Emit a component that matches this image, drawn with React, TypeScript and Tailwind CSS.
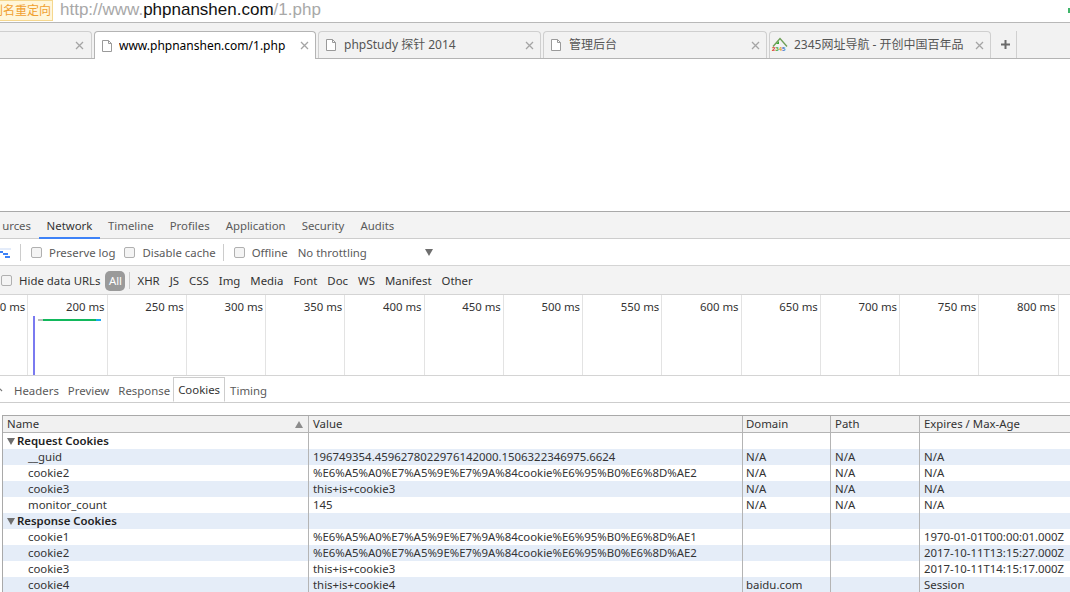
const UI_FONT = 'font-["Noto_Sans","Noto_Sans_CJK_SC",sans-serif]';

const FileIcon = () => (
  <svg width="12" height="14" viewBox="0 0 12 14" className="shrink-0">
    <path d="M1.5 1.5h6l3 3v8h-9z" fill="#fff" stroke="#9a9a9a" strokeWidth="1" />
    <path d="M7.5 1.5v3h3" fill="none" stroke="#9a9a9a" strokeWidth="1" />
  </svg>
);

const CloseX = () => (
  <svg width="9" height="9" viewBox="0 0 9 9" className="shrink-0">
    <path d="M1 1l7 7M8 1l-7 7" stroke="#a5a5a5" strokeWidth="1.3" />
  </svg>
);

const HouseIcon = () => (
  <span className="relative block w-[16px] h-[16px] shrink-0">
    <svg width="16" height="11" viewBox="0 0 16 11" className="block">
      <path d="M1 9.5L8 1.5l7 8" fill="none" stroke="#6f9f58" strokeWidth="1.4" />
      <path d="M4 7l3-3v3z" fill="#3fa535" />
    </svg>
    <span className='absolute left-0 top-[9px] flex text-[6px] leading-[7px] font-bold font-["Liberation_Sans",sans-serif]'>
      <span className="text-[#d9261c]">2</span>
      <span className="text-[#3fa535]">3</span>
      <span className="text-[#e09a1a]">4</span>
      <span className="text-[#2a6fc4]">5</span>
    </span>
  </span>
);

const Tab = ({ title, width, active, icon }: { title: string; width: number; active?: boolean; icon?: 'house' }) => (
  <div
    style={{ width }}
    className={`shrink-0 flex items-center border border-b-0 rounded-t-[4px] pr-[6px] ${icon === 'house' ? 'pl-[2px] gap-[6px]' : active ? 'pl-[6px] gap-[6px]' : 'pl-[6px] gap-[7px]'} ${
      active ? 'h-[28px] -mb-px z-10 bg-white border-[#b4b4b4] text-black' : 'h-[27px] bg-[#f2f2f2] border-[#cfcfcf] text-[#555]'
    }`}
  >
    {icon === 'house' ? <HouseIcon /> : <FileIcon />}
    <span className="flex-1 whitespace-nowrap overflow-hidden text-[12px] text-clip">{title}</span>
    <CloseX />
  </div>
);

const Check = ({ label, className = '' }: { label: string; className?: string }) => (
  <span className={`flex items-center gap-[7px] whitespace-nowrap ${className}`}>
    <span className="w-[11px] h-[11px] rounded-[2px] border border-[#b0b0b0] bg-[#f4f4f4] shrink-0" />
    {label}
  </span>
);

const TICKS = [150, 200, 250, 300, 350, 400, 450, 500, 550, 600, 650, 700, 750, 800, 850];

const COLS = 'grid grid-cols-[306px_434px_88px_89px_1fr]';

type Row = { name: string; value?: string; domain?: string; path?: string; expires?: string; group?: boolean };

const NA = { domain: 'N/A', path: 'N/A', expires: 'N/A' };
const UTF = '%E6%A5%A0%E7%A5%9E%E7%9A%84cookie%E6%95%B0%E6%8D%AE2';

const ROWS: Row[] = [
  { name: 'Request Cookies', group: true },
  { name: '__guid', value: '196749354.4596278022976142000.1506322346975.6624', ...NA },
  { name: 'cookie2', value: UTF, ...NA },
  { name: 'cookie3', value: 'this+is+cookie3', ...NA },
  { name: 'monitor_count', value: '145', ...NA },
  { name: 'Response Cookies', group: true },
  { name: 'cookie1', value: '%E6%A5%A0%E7%A5%9E%E7%9A%84cookie%E6%95%B0%E6%8D%AE1', expires: '1970-01-01T00:00:01.000Z' },
  { name: 'cookie2', value: UTF, expires: '2017-10-11T13:15:27.000Z' },
  { name: 'cookie3', value: 'this+is+cookie3', expires: '2017-10-11T14:15:17.000Z' },
  { name: 'cookie4', value: 'this+is+cookie4', domain: 'baidu.com', expires: 'Session' },
];

export default function App() {
  return (
    <div className={`w-[1070px] h-[592px] overflow-hidden flex flex-col bg-white text-[11.4px] text-[#333] ${UI_FONT}`}>
      {/* address bar */}
      <div className="h-[23px] shrink-0 flex items-start border-b border-[#b8b8b8] relative">
        <div className="h-[21px] w-[53px] shrink-0 flex items-center justify-end overflow-hidden bg-[#fff6da] border border-l-0 border-[#f5d78e] text-[#f0a030] text-[12px] leading-none whitespace-nowrap pr-[1px]">
          别名重定向
        </div>
        <div className='ml-[7px] text-[17px] leading-[20px] text-[#a8a8a8] whitespace-nowrap font-["Liberation_Sans",sans-serif]'>
          http://www.<span className="text-[#111]">phpnanshen.com</span>/1.php
        </div>
        <span className="absolute right-0 top-[8px] w-[2px] h-[5px] bg-[#3fb56a]" />
      </div>

      {/* tab strip */}
      <div className="h-[36px] shrink-0 bg-[#f2f2f2] border-b border-[#b4b4b4] flex items-end gap-[2px]">
        <div className="h-[27px] w-[92px] shrink-0 border border-l-0 border-b-0 border-[#cfcfcf] rounded-tr-[4px] flex items-center justify-end pr-[7px]">
          <CloseX />
        </div>
        <Tab title="www.phpnanshen.com/1.php" width={222} active />
        <Tab title="phpStudy 探针 2014" width={223} />
        <Tab title="管理后台" width={224} />
        <Tab title="2345网址导航 - 开创中国百年品" width={222} icon="house" />
        <div className="w-[24px] h-[27px] shrink-0 flex items-center pl-[7px] border-r border-[#d0d0d0]">
          <svg width="11" height="11" viewBox="0 0 11 11">
            <path d="M5.5 1v9M1 5.5h9" stroke="#6a6a6a" strokeWidth="2" />
          </svg>
        </div>
      </div>

      {/* page */}
      <div className="h-[152px] shrink-0 bg-white" />

      {/* devtools tabs */}
      <div className="h-[28px] shrink-0 bg-[#f3f3f3] border-t border-[#a9a9a9] border-b border-b-[#cdcdcd] flex items-stretch whitespace-nowrap text-[#5a5a5a]">
        <div className="w-[39px] shrink-0 flex items-center justify-end pr-[8px] pt-px overflow-hidden">urces</div>
        <div className="w-[61px] shrink-0 flex items-center justify-center pt-[3px] border-b-2 border-[#3e82f7] text-[#333] h-[27px]">Network</div>
        <div className="flex items-center gap-[16px] pl-[8px] pt-px">
          <span>Timeline</span>
          <span>Profiles</span>
          <span>Application</span>
          <span>Security</span>
          <span>Audits</span>
        </div>
      </div>

      {/* network toolbar */}
      <div className="h-[27px] shrink-0 bg-white border-b border-[#d4d4d4] flex items-center pt-px whitespace-nowrap text-[#5a5a5a]">
        <svg width="11" height="10" viewBox="0 0 11 10" className="shrink-0">
          <path d="M0 1h11" stroke="#c9d9f5" strokeWidth="1" />
          <path d="M0 4h3M3 6h5M5 9h5" stroke="#3e82f7" strokeWidth="2" />
        </svg>
        <span className="w-px h-[17px] bg-[#ccc] ml-[9px]" />
        <Check label="Preserve log" className="ml-[10px]" />
        <Check label="Disable cache" className="ml-[9px]" />
        <span className="w-px h-[17px] bg-[#ccc] ml-[7px]" />
        <Check label="Offline" className="ml-[10px]" />
        <span className="ml-[10px]">No throttling</span>
        <span className="ml-[58px] w-0 h-0 border-l-[4px] border-r-[4px] border-t-[7px] border-l-transparent border-r-transparent border-t-[#6e6e6e]" />
      </div>

      {/* filter bar */}
      <div className="h-[29px] shrink-0 bg-[#f3f3f3] border-b border-[#d4d4d4] flex items-center pt-px whitespace-nowrap text-[#333]">
        <Check label="Hide data URLs" className="ml-[1px]" />
        <span className="ml-[5px] w-[20px] h-[20px] rounded-[5px] bg-[#9a9a9a] text-white flex items-center justify-center">All</span>
        <span className="w-px h-[17px] bg-[#ccc] ml-[4px]" />
        <div className="flex items-center gap-[10px] ml-[7px]">
          <span>XHR</span>
          <span>JS</span>
          <span>CSS</span>
          <span>Img</span>
          <span>Media</span>
          <span>Font</span>
          <span>Doc</span>
          <span>WS</span>
          <span>Manifest</span>
          <span>Other</span>
        </div>
      </div>

      {/* timeline overview */}
      <div className="h-[81px] shrink-0 bg-white border-b border-[#d4d4d4] relative overflow-hidden flex whitespace-nowrap">
        <div className="flex shrink-0 -ml-[51px]">
          {TICKS.map((t) => (
            <div key={t} className="w-[79.25px] shrink-0 border-r border-[#e3e3e3] text-right pr-[2px] pt-[3px] leading-[18px] text-[#333]">
              {t} ms
            </div>
          ))}
        </div>
        <span className="absolute left-[33px] top-[21px] bottom-0 w-[2px] bg-[#7a7af0]" />
        <span className="absolute left-[38px] top-[24px] flex h-[2px]">
          <span className="w-[5px] bg-[#bbb]" />
          <span className="w-[53px] bg-[#12b85c]" />
          <span className="w-[5px] bg-[#1aa8f0]" />
        </span>
      </div>

      {/* detail tabs */}
      <div className="h-[27px] shrink-0 bg-white border-b border-[#cdcdcd] flex items-stretch whitespace-nowrap text-[#5a5a5a]">
        <span className="w-[14px] shrink-0 flex items-center overflow-hidden">
          <svg width="4" height="8" viewBox="0 0 4 8">
            <path d="M-3 1l5 5" stroke="#777" strokeWidth="1.2" />
          </svg>
        </span>
        <div className="flex items-center gap-[9px] pr-[3px] pt-[3px]">
          <span>Headers</span>
          <span>Preview</span>
          <span>Response</span>
        </div>
        <div className="w-[52px] h-[25px] self-end flex items-center justify-center pt-px border border-b-white border-[#cdcdcd] text-[#333] shrink-0">Cookies</div>
        <div className="flex items-center pl-[5px] pt-[3px]">Timing</div>
      </div>

      {/* cookies table */}
      <div className="mt-[12px] ml-[2px] flex-1 border-l border-t border-[#a9a9a9] min-h-0 leading-[16px] whitespace-nowrap">
        <div className={`${COLS} h-[17px] bg-[#f1f1f1] border-b border-[#b4b4b4] text-[#333]`}>
          <div className="px-[4px] flex items-center justify-between border-r border-[#b4b4b4]">
            Name
            <span className="mr-[1px] w-0 h-0 border-l-[4px] border-r-[4px] border-b-[7px] border-l-transparent border-r-transparent border-b-[#8c8c8c]" />
          </div>
          <div className="px-[4px] border-r border-[#b4b4b4]">Value</div>
          <div className="pl-[3px] border-r border-[#b4b4b4]">Domain</div>
          <div className="px-[4px] border-r border-[#b4b4b4]">Path</div>
          <div className="px-[4px]">Expires / Max-Age</div>
        </div>
        {ROWS.map((r, i) => (
          <div key={i} className={`${COLS} h-[16px] ${i % 2 === 1 ? 'bg-[#e5edf8]' : 'bg-white'} text-[#333]`}>
            <div className={`border-r border-[#b4b4b4] ${r.group ? 'pl-[4px] font-semibold text-[#222] flex items-center gap-[2px]' : 'pl-[25px]'}`}>
              {r.group && <span className="w-0 h-0 border-l-[4px] border-r-[4px] border-t-[7px] border-l-transparent border-r-transparent border-t-[#6e6e6e]" />}
              {r.name}
            </div>
            <div className="px-[4px] border-r border-[#b4b4b4]">{r.value}</div>
            <div className="pl-[3px] border-r border-[#b4b4b4]">{r.domain}</div>
            <div className="px-[4px] border-r border-[#b4b4b4]">{r.path}</div>
            <div className="px-[4px]">{r.expires}</div>
          </div>
        ))}
      </div>
    </div>
  );
}
